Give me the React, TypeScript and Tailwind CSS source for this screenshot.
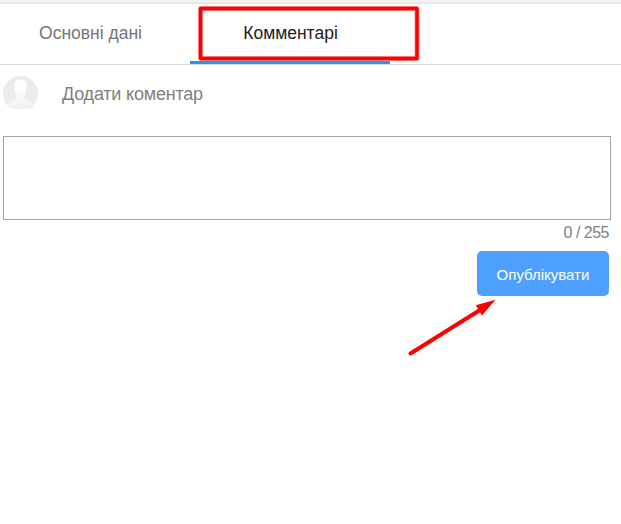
import React from "react";

function Tab({ label, active = false }: { label: string; active?: boolean }) {
  return (
    <button
      type="button"
      className={
        "flex h-[60px] w-[200px] shrink-0 items-center justify-center border-b-[3px] pt-[1px] pl-px text-[17.5px] leading-5 " +
        (active ? "border-[#2196f3] text-[#212121]" : "border-transparent text-[#757575]")
      }
    >
      {label}
    </button>
  );
}

function Avatar() {
  return (
    <svg className="block h-[35px] w-[35px]" viewBox="0 0 35 35" aria-hidden="true">
      <defs>
        <linearGradient id="person" x1="0" y1="0" x2="0" y2="1">
          <stop offset="0" stopColor="#ffffff" />
          <stop offset="0.5" stopColor="#fafafa" />
          <stop offset="1" stopColor="#f1f1f1" />
        </linearGradient>
        <clipPath id="disc">
          <path d="M0 0H35V33H0Z" />
        </clipPath>
      </defs>
      <g clipPath="url(#disc)">
        <circle cx="17.5" cy="17.5" r="17.5" fill="#ebebeb" />
        <path
          d="M17.500 3.500C13 3.500 11 6.300 11.200 10.500C11 11.500 11.200 13.500 11.800 14.500C12.100 17 12.600 18.500 13.300 19.500V22.500C12.800 24.500 8.500 25 6 27C4.500 28 4 29 3.700 30L9 33H26L31.300 30C31 29 30.500 28 29 27C26.500 25 22.200 24.500 21.700 22.500V19.500C22.400 18.500 22.900 17 23.200 14.500C23.800 13.500 24 11.500 23.800 10.500C24 6.300 22 3.500 17.500 3.500Z"
          fill="url(#person)"
        />
      </g>
    </svg>
  );
}

export default function App() {
  return (
    <div className="relative h-[524px] w-[621px] overflow-hidden bg-white font-['Liberation_Sans',Arial,sans-serif]">
      <div className="h-1 border-b-2 border-[#e7e7e7] bg-[#f3f3f3]" />
      <nav className="-ml-2.5 flex h-[61px] border-b border-[#dadada]">
        <Tab label="Основні дані" />
        <Tab label="Комментарі" active />
      </nav>

      <main className="pt-[11px] pr-2.5 pl-[3px]">
        <header className="flex h-[60px] items-start">
          <Avatar />
          <h2 className="ml-6 pt-2 text-lg leading-5 tracking-[-0.2px] text-[#808080]">Додати коментар</h2>
        </header>
        <textarea
          aria-label="Коментар"
          className="block h-[84px] w-full resize-none border border-[#a5a5a5] bg-white outline-none"
        />
        <div className="flex flex-col items-end pr-0.5">
          <span className="mt-[3px] text-base leading-5 tracking-[-0.5px] text-[#808080]">0 / 255</span>
          <button
            type="button"
            className="mt-2 flex h-[45px] w-[132px] items-center justify-center rounded-[5px] bg-[#4da0ff] pt-[3px] text-[15px] text-white"
          >
            Опублікувати
          </button>
        </div>
      </main>

      <svg
        className="pointer-events-none absolute inset-0 h-[524px] w-[621px]"
        viewBox="0 0 621 524"
        fill="none"
        aria-hidden="true"
      >
        <rect x="200.500" y="8.500" width="216.500" height="50" rx="1" stroke="#ff9a9a" strokeWidth="5" />
        <rect x="200.500" y="8.500" width="216.500" height="50" stroke="#ff0000" strokeWidth="3.400" strokeLinejoin="round" />
        <path d="M410.500 353.500 480 310" stroke="#ff0000" strokeWidth="4" strokeLinecap="round" />
        <path d="M495.500 299.800 475.800 305.300 482 315.500Z" fill="#ff0000" />
      </svg>
    </div>
  );
}
